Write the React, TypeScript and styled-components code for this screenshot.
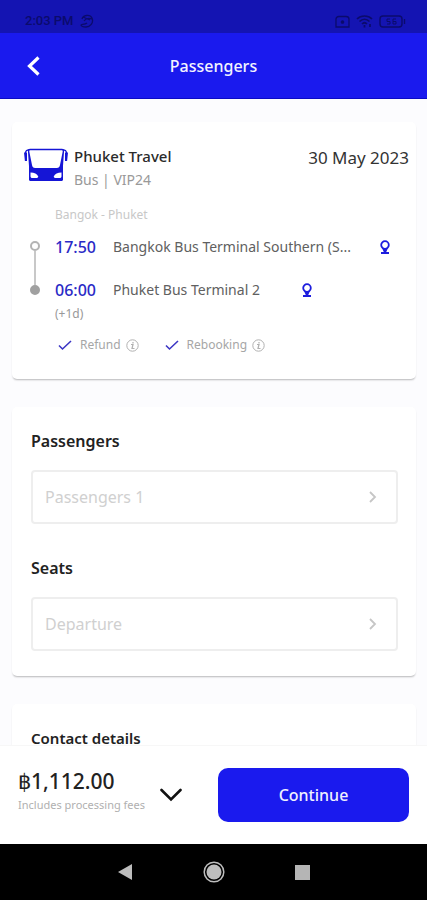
import React from "react";
import styled, { createGlobalStyle } from "styled-components";

const blue = "#1a1aee";

const GlobalStyle = createGlobalStyle`
  * { box-sizing: border-box; }
  body { margin: 0; background: #fff; font-family: "Noto Sans", "Open Sans", sans-serif; color: #222; }
  button { font: inherit; border: 0; padding: 0; background: none; color: inherit; cursor: pointer; }
  h1, h2, p, ul { margin: 0; padding: 0; }
  svg { display: block; flex: none; }
`;

const Screen = styled.div`
  height: 100vh;
  display: flex;
  flex-direction: column;
`;

const StatusBar = styled.div`
  display: flex;
  align-items: center;
  justify-content: space-between;
  padding: 9px 21px 0 25px;
  height: 33px;
  flex: none;
  background: #1414b2;
  color: #0b0b6c;
  font: 500 13px/16px Roboto, sans-serif;
`;

const StatusGroup = styled.div`
  display: flex;
  align-items: center;
  gap: 6px;
`;

const Header = styled.header`
  display: grid;
  grid-template-columns: 40px 1fr 40px;
  align-items: center;
  height: 66px;
  flex: none;
  padding: 0 14px;
  background: ${blue};
  border-bottom: 1px solid #0b0bc4;
  color: #f4f4ff;
`;

const BackButton = styled.button`
  display: flex;
  align-items: center;
  justify-content: center;
  height: 40px;
`;

const HeaderTitle = styled.h1`
  font-size: 16px;
  line-height: 24px;
  font-weight: 500;
  text-align: center;
`;

const Content = styled.main`
  flex: 1;
  min-height: 0;
  overflow-y: auto;
  scrollbar-width: none;
  background: #fcfcfe;
  padding: 23px 11px 28px 12px;
  display: flex;
  flex-direction: column;
  gap: 28px;
`;

const Card = styled.section<{ $form?: boolean }>`
  flex: none;
  background: #fff;
  border-radius: 5px;
  box-shadow: 0 2px 2px -1px rgba(0, 0, 0, 0.24), 0 1px 2px rgba(0, 0, 0, 0.04);
  padding: ${(p) => (p.$form ? "22px 18px 25px 19px" : "22px 7px 26px 12px")};
`;

const TripHead = styled.div`
  display: flex;
  align-items: flex-start;
  gap: 6px;
`;

const BusSlot = styled.div`
  padding-top: 4px;
`;

const Operator = styled.div`
  flex: 1;
`;

const OperatorName = styled.h2`
  font-size: 15px;
  line-height: 24px;
  font-weight: 500;
  color: #2b2b2b;
`;

const OperatorKind = styled.p`
  font-size: 14px;
  line-height: 24px;
  color: #999;
`;

const TripDate = styled.time`
  font-size: 17px;
  line-height: 28px;
  color: #333;
`;

const RouteName = styled.p`
  margin: 15px 0 12px 31px;
  font-size: 12px;
  line-height: 16px;
  color: #c8c8c8;
`;

const Journey = styled.div`
  display: grid;
  grid-template-columns: 21px 1fr;
  column-gap: 10px;
`;

const Track = styled.div`
  display: flex;
  flex-direction: column;
  align-items: center;
  padding-top: 6px;
  height: 60px;
`;

const Dot = styled.span<{ $filled?: boolean }>`
  width: 10px;
  height: 10px;
  flex: none;
  border-radius: 50%;
  border: 2px solid ${(p) => (p.$filled ? "#a0a0a0" : "#b4b4b4")};
  background: ${(p) => (p.$filled ? "#a0a0a0" : "#fff")};
`;

const TrackLine = styled.span`
  width: 2px;
  flex: 1;
  background: #c8c8c8;
`;

const Stops = styled.div`
  display: flex;
  flex-direction: column;
  gap: 19px;
`;

const Stop = styled.div`
  display: grid;
  grid-template-columns: 58px fit-content(244px) auto;
  justify-content: start;
  align-items: center;
  line-height: 24px;
`;

const StopTime = styled.time`
  font-size: 16px;
  font-weight: 500;
  color: #2a2ac6;
`;

const StopName = styled.span`
  font-size: 14px;
  color: #606060;
  white-space: nowrap;
`;

const PinButton = styled.button<{ $wide?: boolean }>`
  margin-left: ${(p) => (p.$wide ? 41 : 28)}px;
`;

const DayShift = styled.p`
  margin: 4px 0 15px 31px;
  font-size: 12px;
  line-height: 16px;
  color: #999;
`;

const Perks = styled.ul`
  display: flex;
  gap: 26px;
  margin-left: 34px;
  list-style: none;
`;

const Perk = styled.li`
  display: flex;
  align-items: center;
  font-size: 12px;
  line-height: 16px;
  color: #a6a6a6;
`;

const PerkText = styled.span`
  margin: 0 5px 0 8px;
`;

const SectionTitle = styled.h2<{ $small?: boolean }>`
  font-size: ${(p) => (p.$small ? 15 : 16)}px;
  line-height: 24px;
  font-weight: 600;
  color: #222;
`;

const Picker = styled.button`
  display: flex;
  align-items: center;
  justify-content: space-between;
  width: 100%;
  height: 54px;
  margin-top: 17px;
  padding: 0 19px 0 12px;
  border: 2px solid #eeeeee;
  border-radius: 4px;
  font-size: 16px;
  line-height: 24px;
  color: #d0d0d0;

  & + ${SectionTitle} {
    margin-top: 32px;
  }
`;

const Footer = styled.footer`
  display: flex;
  align-items: center;
  flex: none;
  height: 99px;
  padding: 0 18px;
  background: #fff;
  border-top: 1px solid #f7f7f7;
`;

const Price = styled.p`
  font-size: 21px;
  line-height: 28px;
  font-weight: 500;
  color: #222;
`;

const PriceNote = styled.p`
  font-size: 11px;
  line-height: 20px;
  color: #b0b0b0;
  white-space: nowrap;
`;

const PriceBlock = styled.div`
  width: 124px;
  padding-bottom: 8px;
`;

const ExpandButton = styled.button`
  margin: 0 36px 0 18px;
`;

const ContinueButton = styled.button`
  flex: 1;
  height: 54px;
  border-radius: 10px;
  background: ${blue};
  color: #f0f0ff;
  font-size: 16px;
  line-height: 24px;
  font-weight: 500;
`;

const SystemNav = styled.nav`
  display: flex;
  align-items: center;
  justify-content: center;
  gap: 66px;
  flex: none;
  height: 56px;
  background: #000;
`;

const NavButton = styled.button`
  display: flex;
  align-items: center;
  justify-content: center;
  width: 23px;
  height: 24px;
`;

const BusIcon = () => (
  <svg width="44" height="34" viewBox="0 0 44 34" aria-hidden="true">
    <path d="M6 .8h32c1.500 0 2.200.8 2.100 2L39 18v13.500c0 .9-.6 1.500-1.500 1.500h-31c-.9 0-1.500-.6-1.500-1.500V18L3.900 2.800C3.800 1.600 4.500.8 6 .8z" fill="#1515d6" />
    <path d="M6.500 2.200h31c.9 0 1.300.5 1.200 1.400L36 17c-.3 2-1.300 3-3.200 3H11.200c-1.900 0-2.900-1-3.200-3L5.300 3.600c-.1-.9.300-1.400 1.200-1.400z" fill="#fff" />
    <path d="M5 1.800C2.500 1.800 1.500 2.500 1.500 5M39 1.800c2.500 0 3.500.7 3.500 3.200" fill="none" stroke="#1515d6" strokeWidth="1.200" />
    <path d="M0 4.500h3v8.500H.9zM41 4.500h3l-.9 8.500H41z" fill="#1515d6" />
    <path d="M6.500 24.500c4 0 6.500 1.200 7.800 4-.3 1-1 1.500-2.300 1.500H8.500c-1.400 0-2-.6-2-2zM37.500 24.500c-4 0-6.500 1.200-7.800 4 .3 1 1 1.500 2.300 1.500h3.500c1.400 0 2-.6 2-2z" fill="#fff" />
  </svg>
);

const PinIcon = () => (
  <svg width="12" height="15" viewBox="0 0 12 15" aria-hidden="true">
    <circle cx="6" cy="5" r="3.800" fill="#fff" stroke="#1d1dde" strokeWidth="1.800" />
    <path d="M3 8h6L7 12.500H5zM2 12h8v2H2z" fill="#1d1dde" />
  </svg>
);

const TickIcon = () => (
  <svg width="14" height="12" viewBox="0 0 14 12" aria-hidden="true">
    <path d="M1 6.500 4.500 10 13 2" fill="none" stroke="#3b35c4" strokeWidth="1.600" />
  </svg>
);

const InfoIcon = () => (
  <svg width="13" height="13" viewBox="0 0 13 13" fill="none" stroke="#b0b0b0" aria-hidden="true">
    <circle cx="6.500" cy="6.500" r="5.700" />
    <path d="M5 5.500h2L6 9.500h2.500M7 3v1.500" strokeWidth="1.200" />
  </svg>
);

const ChevronRight = () => (
  <svg width="8" height="12" viewBox="0 0 8 12" aria-hidden="true">
    <path d="m1 1 5 5-5 5" fill="none" stroke="#c6c6c6" strokeWidth="1.800" />
  </svg>
);

const SwirlIcon = () => (
  <svg width="14" height="14" viewBox="0 0 14 14" fill="none" stroke="currentColor" strokeWidth="1.300" aria-hidden="true">
    <path d="M2 5c1-4 8-5 10-1 2 5-2 9-6 9-3 0-5-1-5-2s4 0 6-2M4 7c2-3 5-3 8-2M3 3l7 3" />
  </svg>
);

const CameraIcon = () => (
  <svg width="15" height="13" viewBox="0 0 15 13" fill="none" stroke="currentColor" strokeWidth="1.300" aria-hidden="true">
    <path d="M4 1.500h7c2 0 3 1 3 2.500v8H1V4c0-1.500 1-2.500 3-2.500z" />
    <circle cx="7.500" cy="7" r="1.200" fill="currentColor" />
  </svg>
);

const WifiIcon = () => (
  <svg width="17" height="13" viewBox="0 0 17 13" fill="none" stroke="currentColor" strokeWidth="1.700" aria-hidden="true">
    <path d="M1 4c4-4 11-4 15 0M3.500 6.500c3-3 7-3 10 0M6 9c1.500-1.500 3.500-1.500 5 0M8.500 10v2.500M14 9v3" />
  </svg>
);

const BatteryIcon = () => (
  <svg width="27" height="13" viewBox="0 0 27 13" fill="none" stroke="currentColor" strokeWidth="1.400" aria-hidden="true">
    <rect x="1" y="1" width="22" height="11" rx="3" />
    <path d="M25.500 4v5" />
    <path d="M11 4H8v2.500h3V9H8M17 4h-3v5h3V6.500h-3" strokeWidth="1" />
  </svg>
);

interface StopData {
  time: string;
  name: string;
  wide?: boolean;
}

const stops: StopData[] = [
  { time: "17:50", name: "Bangkok Bus Terminal Southern (S..." },
  { time: "06:00", name: "Phuket Bus Terminal 2", wide: true },
];

const perks = ["Refund", "Rebooking"];

const fields = [
  { id: "passengers", title: "Passengers", value: "Passengers 1" },
  { id: "seats", title: "Seats", value: "Departure" },
];

export default function App() {
  return (
    <Screen>
      <GlobalStyle />
      <StatusBar>
        <StatusGroup>
          <span>2:03 PM</span>
          <SwirlIcon />
        </StatusGroup>
        <StatusGroup>
          <CameraIcon />
          <WifiIcon />
          <BatteryIcon />
        </StatusGroup>
      </StatusBar>
      <Header>
        <BackButton aria-label="Back">
          <svg width="14" height="20" viewBox="0 0 14 20" aria-hidden="true">
            <path d="m11.500 1.500-9 8.500 9 8.500" fill="none" stroke="#fff" strokeWidth="3.200" />
          </svg>
        </BackButton>
        <HeaderTitle>Passengers</HeaderTitle>
      </Header>

      <Content>
        <Card>
          <TripHead>
            <BusSlot>
              <BusIcon />
            </BusSlot>
            <Operator>
              <OperatorName>Phuket Travel</OperatorName>
              <OperatorKind>Bus | VIP24</OperatorKind>
            </Operator>
            <TripDate dateTime="2023-05-30">30 May 2023</TripDate>
          </TripHead>
          <RouteName>Bangok - Phuket</RouteName>
          <Journey>
            <Track>
              <Dot />
              <TrackLine />
              <Dot $filled />
            </Track>
            <Stops>
              {stops.map((s) => (
                <Stop key={s.time}>
                  <StopTime>{s.time}</StopTime>
                  <StopName>{s.name}</StopName>
                  <PinButton $wide={s.wide} aria-label={`Show ${s.name} on map`}>
                    <PinIcon />
                  </PinButton>
                </Stop>
              ))}
            </Stops>
          </Journey>
          <DayShift>(+1d)</DayShift>
          <Perks>
            {perks.map((p) => (
              <Perk key={p}>
                <TickIcon />
                <PerkText>{p}</PerkText>
                <button aria-label={`About ${p}`}>
                  <InfoIcon />
                </button>
              </Perk>
            ))}
          </Perks>
        </Card>

        <Card $form>
          {fields.map((f) => (
            <React.Fragment key={f.id}>
              <SectionTitle id={f.id}>{f.title}</SectionTitle>
              <Picker aria-describedby={f.id}>
                {f.value}
                <ChevronRight />
              </Picker>
            </React.Fragment>
          ))}
        </Card>

        <Card $form>
          <SectionTitle $small>Contact details</SectionTitle>
        </Card>
      </Content>

      <Footer>
        <PriceBlock>
          <Price>฿1,112.00</Price>
          <PriceNote>Includes processing fees</PriceNote>
        </PriceBlock>
        <ExpandButton aria-label="Show price details">
          <svg width="22" height="14" viewBox="0 0 22 14" aria-hidden="true">
            <path d="m1.500 2 9.500 9.500L20.500 2" fill="none" stroke="#111" strokeWidth="2.600" strokeLinecap="round" />
          </svg>
        </ExpandButton>
        <ContinueButton>Continue</ContinueButton>
      </Footer>

      <SystemNav aria-label="System">
        <NavButton aria-label="Back">
          <svg width="16" height="18" viewBox="0 0 16 18" aria-hidden="true">
            <path d="M15 1v16L1 9z" fill="#bdbdbd" />
          </svg>
        </NavButton>
        <NavButton aria-label="Home">
          <svg width="22" height="22" viewBox="0 0 22 22" aria-hidden="true">
            <circle cx="11" cy="11" r="9.800" fill="none" stroke="#bdbdbd" strokeWidth="1.500" />
            <circle cx="11" cy="11" r="7.500" fill="#bdbdbd" />
          </svg>
        </NavButton>
        <NavButton aria-label="Recent apps">
          <svg width="15" height="15" viewBox="0 0 15 15" aria-hidden="true">
            <path d="M0 0h15v15H0z" fill="#b5b5b5" />
          </svg>
        </NavButton>
      </SystemNav>
    </Screen>
  );
}
